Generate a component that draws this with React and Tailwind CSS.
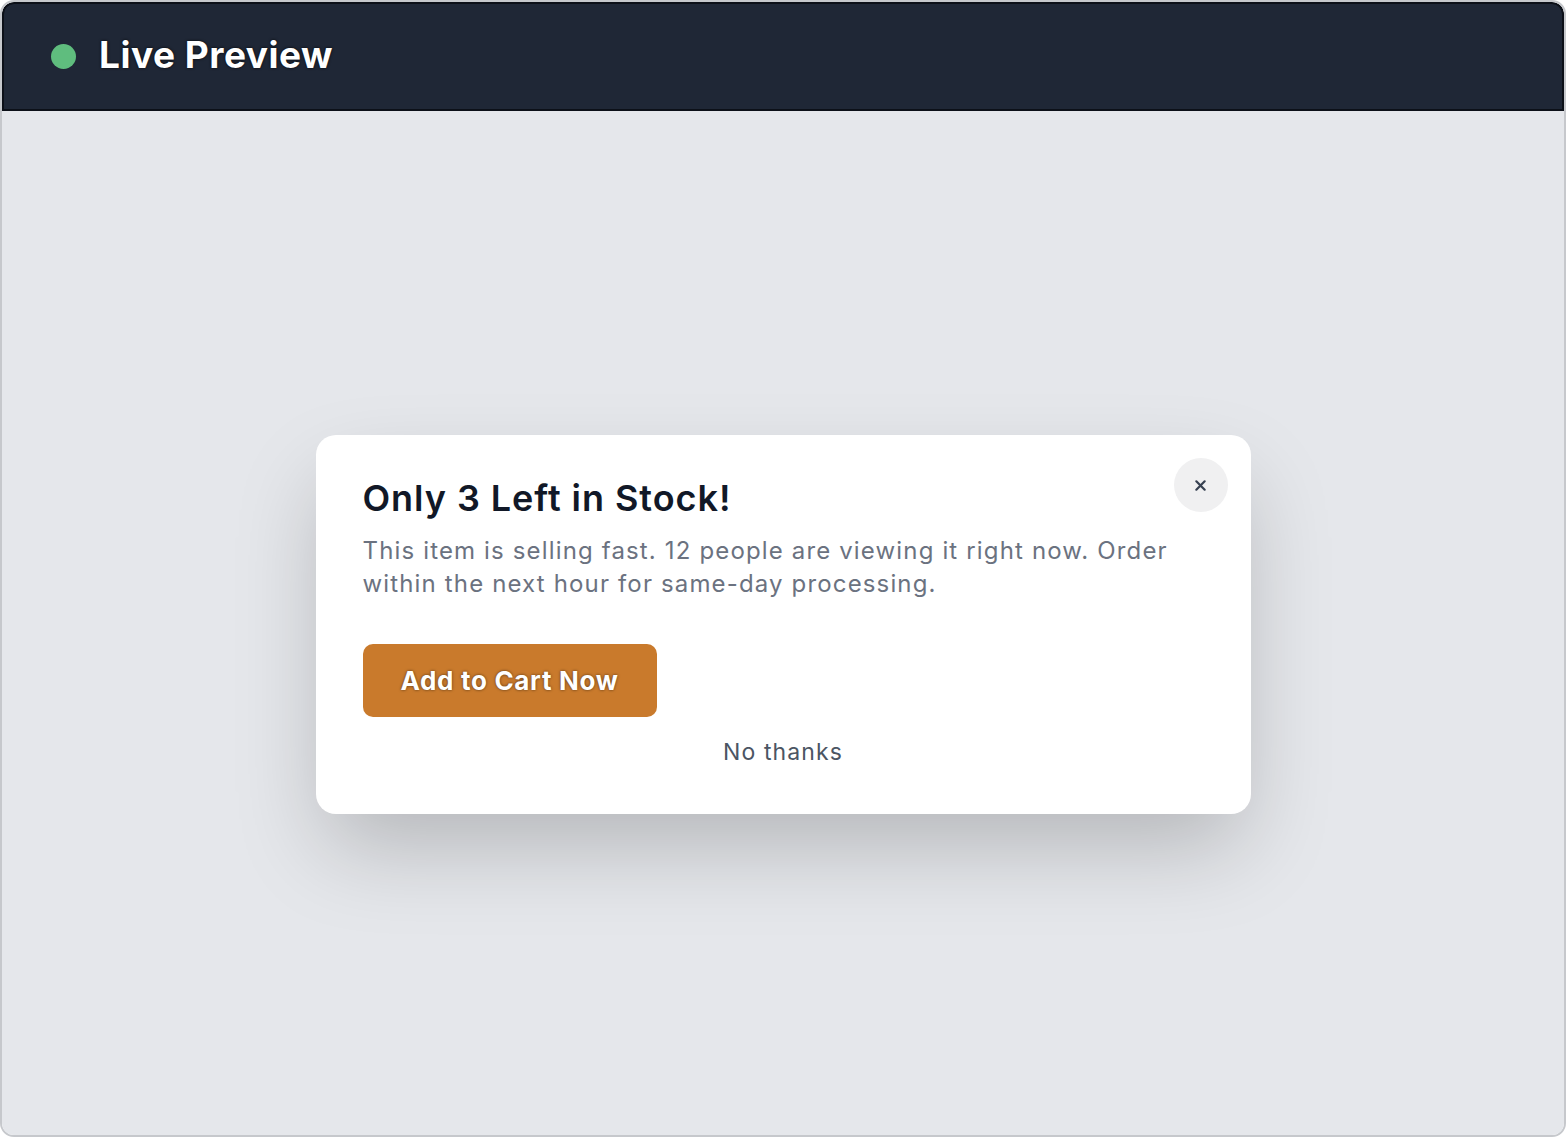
import React from 'react';

function CloseIcon() {
	return (
		<svg width="13" height="13" viewBox="0 0 14 14" fill="none">
			<path d="M2.5 2.5L11.5 11.5M11.5 2.5L2.5 11.5" stroke="#374151" strokeWidth="2.4" strokeLinecap="round" />
		</svg>
	);
}

function App() {
	return (
		<div className="w-full h-[1137px] bg-white font-['Inter',sans-serif]">
			<div className="h-full flex flex-col border-2 border-[#c6c8cc] rounded-[14px] overflow-hidden">
				<div className="h-[109px] shrink-0 bg-[#1f2736] border-2 border-[#0c1018] rounded-t-[12px] flex items-center pl-[47px] pb-[4px] gap-[23px]">
					<span className="w-[25px] h-[25px] mt-[4px] rounded-full bg-[#5fbd7e]" />
					<h1 className="text-[37px] font-bold text-white leading-none tracking-[0.5px] [text-shadow:0_0_3px_rgba(0,0,0,0.9)]">
						Live Preview
					</h1>
				</div>

				<div className="flex-1 bg-[#e5e7eb] flex items-center justify-center">
					<div className="relative w-[935px] bg-white rounded-[20px] px-[47px] pt-[40px] pb-[47px] mt-[2px] shadow-[0_40px_90px_-10px_rgba(0,0,0,0.22)]">
						<button className="absolute top-[23px] right-[23px] w-[54px] h-[54px] rounded-full bg-[#f0f0f1] flex items-center justify-center pt-[2px]">
							<CloseIcon />
						</button>
						<h2 className="text-[36px] font-semibold text-[#111827] leading-[46px] tracking-[0.95px]">
							Only 3 Left in Stock!
						</h2>
						<p className="mt-[13px] text-[24px] leading-[33px] text-[#6b7280] tracking-[1.15px]">
							This item is selling fast. 12 people are viewing it right now. Order within the next hour for same-day processing.
						</p>
						<button className="mt-[44px] w-[294px] h-[73px] rounded-[10px] bg-[#c97a2c] text-white text-[26px] font-bold tracking-[0.7px] [text-shadow:0_0_3px_rgba(0,0,0,0.6)]">
							Add to Cart Now
						</button>
						<p className="mt-[20px] text-center text-[23px] leading-[30px] text-[#4b5563] tracking-[1.1px]">
							No thanks
						</p>
					</div>
				</div>
			</div>
		</div>
	);
}

export default App;
